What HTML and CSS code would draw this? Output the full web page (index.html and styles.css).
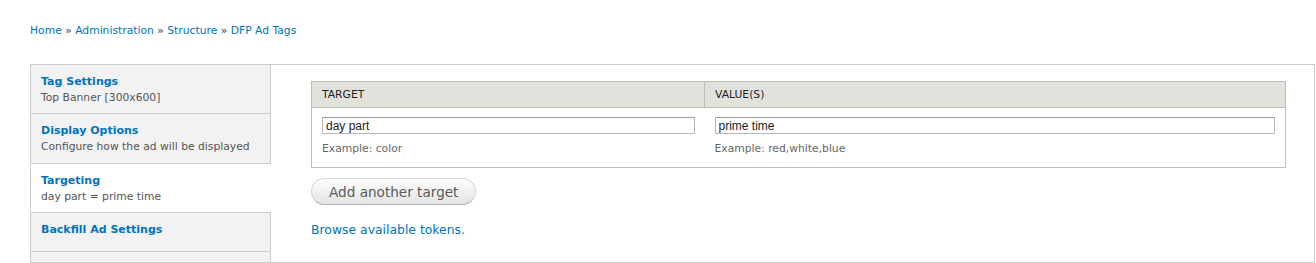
FILE: index.html
```html
<!DOCTYPE html>
<html lang="en">
<head>
<meta charset="utf-8">
<title>DFP Ad Tags</title>
<link rel="stylesheet" href="styles.css">
</head>
<body>
<div class="page">
  <nav class="breadcrumb">
    <a href="#">Home</a> » <a href="#">Administration</a> » <a href="#">Structure</a> » <a href="#">DFP Ad Tags</a>
  </nav>

  <div class="vtabs">
    <ul class="vtabs-list">
      <li class="vtab">
        <a href="#" class="vtab-link">
          <strong class="vtab-title">Tag Settings</strong>
          <span class="vtab-summary">Top Banner [300x600]</span>
        </a>
      </li>
      <li class="vtab vtab--tall">
        <a href="#" class="vtab-link">
          <strong class="vtab-title">Display Options</strong>
          <span class="vtab-summary">Configure how the ad will be displayed</span>
        </a>
      </li>
      <li class="vtab vtab--selected">
        <a href="#" class="vtab-link">
          <strong class="vtab-title">Targeting</strong>
          <span class="vtab-summary">day part = prime time</span>
        </a>
      </li>
      <li class="vtab vtab--nosummary">
        <a href="#" class="vtab-link">
          <strong class="vtab-title">Backfill Ad Settings</strong>
        </a>
      </li>
    </ul>

    <div class="vtabs-pane">
      <table class="targets">
        <thead>
          <tr>
            <th class="col-target">Target</th>
            <th class="col-value">Value(s)</th>
          </tr>
        </thead>
        <tbody>
          <tr>
            <td>
              <input class="text-input" type="text" value="day part">
              <div class="description">Example: color</div>
            </td>
            <td>
              <input class="text-input" type="text" value="prime time">
              <div class="description">Example: red,white,blue</div>
            </td>
          </tr>
        </tbody>
      </table>

      <button class="button" type="button">Add another target</button>

      <p class="tokens"><a href="#">Browse available tokens.</a></p>
    </div>
  </div>
</div>
</body>
</html>
```

FILE: styles.css
```css
html, body {
  margin: 0;
  padding: 0;
  background: #fff;
}

body {
  font-family: "DejaVu Sans", Verdana, sans-serif;
  color: #333;
}

a {
  color: #0074bd;
  text-decoration: none;
}

.page {
  padding: 24px 1px 0 30px;
}

/* Breadcrumb */
.breadcrumb {
  font-size: 10.75px;
  line-height: 14px;
  color: #333;
  margin-bottom: 26px;
}

/* Vertical tabs */
.vtabs {
  display: flex;
  border: 1px solid #ccc;
  height: 197px;
}

.vtabs-list {
  list-style: none;
  margin: 0;
  padding: 0;
  width: 240px;
  flex: 0 0 240px;
  box-sizing: border-box;
  background: #f2f2f2;
  border-right: 1px solid #ccc;
}

.vtab {
  border-bottom: 1px solid #ccc;
  background: #f2f2f2;
}

.vtab--selected {
  background: #fff;
  margin-right: -1px;
  position: relative;
}

.vtab-link {
  display: block;
  padding: 9px 10px 7px 10px;
}

.vtab--tall .vtab-link {
  padding-bottom: 8px;
}

.vtab--nosummary .vtab-link {
  padding-bottom: 13px;
}

.vtab-title {
  display: block;
  font-weight: bold;
  font-size: 11px;
  line-height: 16px;
  color: #0074bd;
}

.vtab-summary {
  display: block;
  font-size: 10.75px;
  line-height: 16px;
  color: #555;
}

/* Pane */
.vtabs-pane {
  flex: 1 1 auto;
  padding: 16px 28px 24px 40px;
  background: #fff;
  min-width: 0;
}

.targets {
  width: 100%;
  border-collapse: collapse;
  border: 1px solid #bebfb9;
  table-layout: fixed;
}

.targets th {
  background: #e1e2dc;
  border-bottom: 1px solid #bebfb9;
  text-align: left;
  font-weight: normal;
  text-transform: uppercase;
  font-size: 10.75px;
  line-height: 15px;
  padding: 5px 10px 5px 10px;
  color: #222;
}

.targets .col-target {
  width: 372px;
  border-right: 1px solid #bebfb9;
}

.targets td {
  vertical-align: top;
  padding: 9px 10px 11px 10px;
}

.text-input {
  display: block;
  width: 100%;
  box-sizing: border-box;
  height: 17px;
  margin: 0;
  padding: 0 3px;
  border: 1px solid #b8b8b8;
  border-top-color: #999;
  font-family: "Liberation Sans", Arial, sans-serif;
  font-size: 12px;
  line-height: 15px;
  color: #222;
  background: #fff;
  outline: none;
}

.description {
  margin-top: 8px;
  font-size: 10.75px;
  line-height: 14px;
  color: #666;
}

.button {
  display: block;
  margin: 10px 0 0 0;
  height: 27px;
  padding: 4px 17px;
  box-sizing: border-box;
  font-family: "DejaVu Sans", Verdana, sans-serif;
  font-size: 13.6px;
  line-height: 16px;
  color: #5a5a5a;
  background: linear-gradient(#fefefe, #e3e3e3);
  border: 1px solid #d9d9d9;
  border-bottom-color: #b4b4b4;
  border-left-color: #d2d2d2;
  border-right-color: #d2d2d2;
  border-radius: 20px;
  cursor: pointer;
}

.tokens {
  margin: 17px 0 0 0;
  font-size: 12.4px;
  line-height: 16px;
}
```
